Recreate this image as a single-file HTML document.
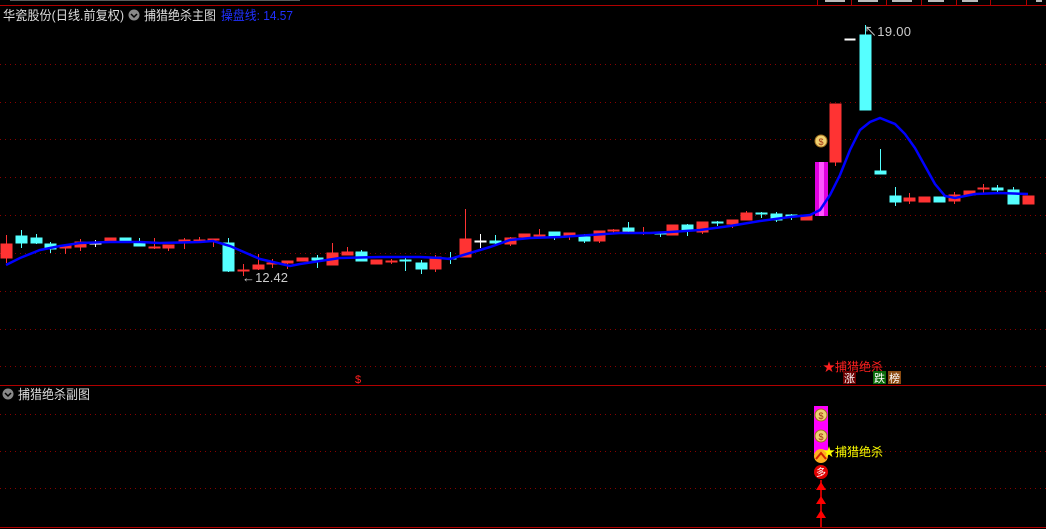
<!DOCTYPE html>
<html><head><meta charset="utf-8"><style>
html,body{margin:0;padding:0;background:#000;width:1046px;height:529px;overflow:hidden}
svg{display:block}
text{font-family:"Liberation Sans","Noto Sans CJK SC",sans-serif}
</style></head><body>
<svg width="1046" height="529" viewBox="0 0 1046 529" xmlns="http://www.w3.org/2000/svg">
<g stroke="#8a0000" stroke-width="1" stroke-dasharray="1,4">
<line x1="0" y1="64.5" x2="1046" y2="64.5"/><line x1="0" y1="102.5" x2="1046" y2="102.5"/>
<line x1="0" y1="139.5" x2="1046" y2="139.5"/><line x1="0" y1="177.5" x2="1046" y2="177.5"/>
<line x1="0" y1="215.5" x2="1046" y2="215.5"/><line x1="0" y1="253.5" x2="1046" y2="253.5"/>
<line x1="0" y1="291.5" x2="1046" y2="291.5"/><line x1="0" y1="329.5" x2="1046" y2="329.5"/>
<line x1="0" y1="366.5" x2="1046" y2="366.5"/>
<line x1="0" y1="414.5" x2="1046" y2="414.5"/><line x1="0" y1="451.5" x2="1046" y2="451.5"/>
<line x1="0" y1="488.5" x2="1046" y2="488.5"/>
</g>
<g stroke="#b00000" stroke-width="1">
<line x1="0" y1="5.5" x2="1046" y2="5.5"/>
<line x1="0" y1="385.5" x2="1046" y2="385.5"/>
<line x1="0" y1="527.5" x2="1046" y2="527.5"/>
<line x1="817.5" y1="0" x2="817.5" y2="5"/><line x1="851.5" y1="0" x2="851.5" y2="5"/>
<line x1="886.5" y1="0" x2="886.5" y2="5"/><line x1="921.5" y1="0" x2="921.5" y2="5"/>
<line x1="956.5" y1="0" x2="956.5" y2="5"/><line x1="990.5" y1="0" x2="990.5" y2="5"/>
<line x1="1026.5" y1="0" x2="1026.5" y2="5"/>
</g>
<g fill="#bbb"><rect x="825" y="0" width="20" height="2"/><rect x="858" y="0" width="20" height="2"/><rect x="892" y="0" width="20" height="2"/><rect x="928" y="0" width="16" height="2"/><rect x="962" y="0" width="16" height="2"/><rect x="1036" y="0" width="6" height="2"/>
<rect x="10" y="0" width="290" height="1" opacity="0.5"/></g>

<g stroke-width="1">
<g stroke="#ff3333" fill="#ff3333">
<line x1="6.5" y1="235" x2="6.5" y2="263"/><rect x="1" y="244" width="11" height="14"/>
<line x1="65.5" y1="246" x2="65.5" y2="254"/><rect x="60" y="246" width="11" height="2"/>
<line x1="80.5" y1="239" x2="80.5" y2="251"/><rect x="75" y="242" width="11" height="5"/>
<rect x="105" y="238" width="11" height="4"/>
<line x1="154.5" y1="238" x2="154.5" y2="249"/><rect x="149" y="247" width="11" height="1"/>
<line x1="168.5" y1="245" x2="168.5" y2="251"/><rect x="163" y="245" width="11" height="3"/>
<line x1="184.5" y1="238" x2="184.5" y2="249"/><rect x="179" y="240" width="11" height="3"/>
<line x1="199.5" y1="237" x2="199.5" y2="243"/><rect x="194" y="240" width="11" height="1"/>
<line x1="213.5" y1="239" x2="213.5" y2="247"/><rect x="208" y="239" width="11" height="1"/>
<line x1="243.5" y1="264" x2="243.5" y2="276"/><rect x="238" y="270" width="11" height="1"/>
<line x1="258.5" y1="254" x2="258.5" y2="270"/><rect x="253" y="265" width="11" height="4"/>
<line x1="272.5" y1="259" x2="272.5" y2="268"/><rect x="267" y="263" width="11" height="1"/>
<line x1="287.5" y1="261" x2="287.5" y2="269"/><rect x="282" y="261" width="11" height="2"/>
<rect x="297" y="258" width="11" height="3"/>
<line x1="332.5" y1="243" x2="332.5" y2="265"/><rect x="327" y="253" width="11" height="12"/>
<line x1="347.5" y1="247" x2="347.5" y2="255"/><rect x="342" y="252" width="11" height="3"/>
<rect x="371" y="260" width="11" height="4"/>
<line x1="391.5" y1="259" x2="391.5" y2="264"/><rect x="386" y="261" width="11" height="1"/>
<line x1="435.5" y1="255" x2="435.5" y2="272"/><rect x="430" y="257" width="11" height="12"/>
<line x1="465.5" y1="209" x2="465.5" y2="257"/><rect x="460" y="239" width="11" height="18"/>
<line x1="510.5" y1="237" x2="510.5" y2="246"/><rect x="505" y="238" width="11" height="6"/>
<rect x="519" y="234" width="11" height="3"/>
<line x1="539.5" y1="229" x2="539.5" y2="237"/><rect x="534" y="235" width="11" height="1"/>
<line x1="569.5" y1="233" x2="569.5" y2="240"/><rect x="564" y="233" width="11" height="2"/>
<line x1="599.5" y1="231" x2="599.5" y2="243"/><rect x="594" y="231" width="11" height="10"/>
<line x1="613.5" y1="229" x2="613.5" y2="233"/><rect x="608" y="230" width="11" height="1"/>
<line x1="628.5" y1="229" x2="628.5" y2="233"/><rect x="623" y="230" width="11" height="2"/>
<line x1="643.5" y1="227" x2="643.5" y2="235"/>
<rect x="667" y="225" width="11" height="10"/>
<line x1="702.5" y1="222" x2="702.5" y2="234"/><rect x="697" y="222" width="11" height="10"/>
<line x1="732.5" y1="220" x2="732.5" y2="228"/><rect x="727" y="220" width="11" height="4"/>
<line x1="746.5" y1="211" x2="746.5" y2="220"/><rect x="741" y="213" width="11" height="7"/>
<rect x="801" y="215" width="11" height="5"/>
<line x1="835.5" y1="104" x2="835.5" y2="166"/><rect x="830" y="104" width="11" height="58"/>
<rect x="904" y="198" width="11" height="3"/><line x1="909.5" y1="193" x2="909.5" y2="204"/>
<rect x="919" y="197" width="11" height="5"/>
<line x1="954.5" y1="192" x2="954.5" y2="204"/><rect x="949" y="195" width="11" height="6"/>
<rect x="964" y="191" width="11" height="4"/>
<line x1="983.5" y1="184" x2="983.5" y2="193"/><rect x="978" y="188" width="11" height="1"/>
<rect x="1023" y="196" width="11" height="8"/>
</g>
<g stroke="#55ffff" fill="#55ffff">
<line x1="21.5" y1="230" x2="21.5" y2="248"/><rect x="16" y="236" width="11" height="7"/>
<line x1="36.5" y1="234" x2="36.5" y2="244"/><rect x="31" y="238" width="11" height="5"/>
<line x1="50.5" y1="242" x2="50.5" y2="253"/><rect x="45" y="244" width="11" height="5"/>
<rect x="120" y="238" width="11" height="4"/>
<line x1="139.5" y1="238" x2="139.5" y2="246"/><rect x="134" y="242" width="11" height="4"/>
<line x1="228.5" y1="238" x2="228.5" y2="272"/><rect x="223" y="243" width="11" height="28"/>
<line x1="317.5" y1="255" x2="317.5" y2="268"/><rect x="312" y="258" width="11" height="2"/>
<line x1="361.5" y1="250" x2="361.5" y2="261"/><rect x="356" y="252" width="11" height="9"/>
<line x1="405.5" y1="258" x2="405.5" y2="271"/><rect x="400" y="260" width="11" height="1"/>
<line x1="421.5" y1="260" x2="421.5" y2="274"/><rect x="416" y="263" width="11" height="6"/>
<line x1="450.5" y1="252" x2="450.5" y2="264"/><rect x="445" y="258" width="11" height="1"/>
<line x1="495.5" y1="235" x2="495.5" y2="246"/><rect x="490" y="241" width="11" height="2"/>
<line x1="554.5" y1="232" x2="554.5" y2="240"/><rect x="549" y="232" width="11" height="4"/>
<line x1="584.5" y1="234" x2="584.5" y2="243"/><rect x="579" y="237" width="11" height="4"/>
<line x1="628.5" y1="222" x2="628.5" y2="232"/><rect x="623" y="228" width="11" height="3"/>
<line x1="660.5" y1="232" x2="660.5" y2="237"/><rect x="655" y="233" width="11" height="1"/>
<line x1="687.5" y1="224" x2="687.5" y2="236"/><rect x="682" y="225" width="11" height="5"/>
<line x1="717.5" y1="221" x2="717.5" y2="226"/><rect x="712" y="222" width="11" height="1"/>
<line x1="761.5" y1="212" x2="761.5" y2="218"/><rect x="756" y="213" width="11" height="1"/>
<line x1="776.5" y1="212" x2="776.5" y2="222"/><rect x="771" y="214" width="11" height="6"/>
<line x1="791.5" y1="214" x2="791.5" y2="220"/><rect x="786" y="215" width="11" height="1"/>
<line x1="865.5" y1="25" x2="865.5" y2="35"/><rect x="860" y="35" width="11" height="75"/>
<line x1="880.5" y1="149" x2="880.5" y2="171"/><rect x="875" y="171" width="11" height="3"/>
<line x1="895.5" y1="187" x2="895.5" y2="206"/><rect x="890" y="196" width="11" height="6"/>
<rect x="934" y="197" width="11" height="5"/>
<line x1="997.5" y1="185" x2="997.5" y2="192"/><rect x="992" y="188" width="11" height="2"/>
<line x1="1013.5" y1="187" x2="1013.5" y2="190"/><rect x="1008" y="190" width="11" height="14"/>
</g>
<g stroke="#fff" fill="#fff">
<line x1="95.5" y1="240" x2="95.5" y2="247"/><rect x="90" y="243" width="11" height="1"/>
<line x1="480.5" y1="234" x2="480.5" y2="248"/><rect x="475" y="241" width="11" height="1"/>
<rect x="845" y="39" width="10" height="1"/>
</g>
<rect x="815" y="162" width="13" height="54" fill="#e000e0"/>
<rect x="819" y="162" width="5" height="54" fill="#ff55ff"/>
</g>
<polyline fill="none" stroke="#0000ff" stroke-width="2.5" points="6,265 20,258 40,250 60,246 80,243 110,242 140,242 160,243 200,242 213,241 230,246 260,259 290,266 300,264 320,261 340,258 380,257 420,257 440,258 450,259 470,253 490,247 510,240 530,238 560,237 590,235 620,233 650,233 670,232 700,230 730,226 760,221 790,217 810,215 820,210 830,195 840,175 850,150 860,130 870,122 880,118 895,124 905,134 915,148 925,166 935,184 945,196 955,198 975,194 1000,193 1028,194"/>

<text x="242" y="282" fill="#ccc" font-size="13" textLength="46">←12.42</text>
<text x="864" y="36" fill="#ccc" font-size="13" textLength="47">↖19.00</text>
<circle cx="821" cy="141" r="6" fill="#f0d070" stroke="#a07020"/><text x="821" y="145" fill="#a03010" font-size="9" text-anchor="middle">$</text>

<text x="3" y="20" fill="#ddd" font-size="13" textLength="121" lengthAdjust="spacingAndGlyphs">华瓷股份(日线.前复权)</text>
<circle cx="134" cy="15" r="5.5" fill="#888"/><path d="M131 14 L134 17 L137 14" stroke="#000" stroke-width="1.5" fill="none"/>
<text x="144" y="20" fill="#ddd" font-size="13" textLength="72" lengthAdjust="spacingAndGlyphs">捕猎绝杀主图</text>
<text x="221" y="20" fill="#2030ff" font-size="13" textLength="72" lengthAdjust="spacingAndGlyphs">操盘线: 14.57</text>

<text x="358" y="383" fill="#ff2020" font-size="11" text-anchor="middle">$</text>
<text x="823" y="371" fill="#ff2020" font-size="12">★捕猎绝杀</text>
<rect x="843" y="371" width="13" height="13" fill="#6a0000"/><text x="849.5" y="382" fill="#fff" font-size="11" text-anchor="middle">涨</text>
<rect x="873" y="371" width="13" height="13" fill="#0a6a0a"/><text x="879.5" y="382" fill="#fff" font-size="11" text-anchor="middle">跌</text>
<rect x="888" y="371" width="13" height="13" fill="#8a4a10"/><text x="894.5" y="382" fill="#fff" font-size="11" text-anchor="middle">榜</text>

<circle cx="8" cy="394" r="5.5" fill="#888"/><path d="M5 393 L8 396 L11 393" stroke="#000" stroke-width="1.5" fill="none"/>
<text x="18" y="399" fill="#ddd" font-size="13" textLength="72" lengthAdjust="spacingAndGlyphs">捕猎绝杀副图</text>

<rect x="814" y="406" width="14" height="48" fill="#ff00ff"/>
<circle cx="821" cy="415" r="6" fill="#f0d070" stroke="#a07020"/><text x="821" y="419" fill="#a03010" font-size="9" text-anchor="middle">$</text>
<circle cx="821" cy="436" r="6" fill="#f0d070" stroke="#a07020"/><text x="821" y="440" fill="#a03010" font-size="9" text-anchor="middle">$</text>
<circle cx="821" cy="456" r="7" fill="#ffb020"/><path d="M816 459 L821 453 L826 459" stroke="#d02000" stroke-width="2" fill="none"/>
<circle cx="821" cy="472" r="7" fill="#e00000"/><text x="821" y="476" fill="#fff" font-size="10" text-anchor="middle">多</text>
<text x="823" y="456" fill="#ffff00" font-size="12">★捕猎绝杀</text>
<line x1="821" y1="480" x2="821" y2="527" stroke="#ff0000" stroke-width="1.5"/>
<polygon points="821,482 816,490 826,490" fill="#ff0000"/>
<polygon points="821,496 816,504 826,504" fill="#ff0000"/>
<polygon points="821,510 816,518 826,518" fill="#ff0000"/>
</svg>
</body></html>
